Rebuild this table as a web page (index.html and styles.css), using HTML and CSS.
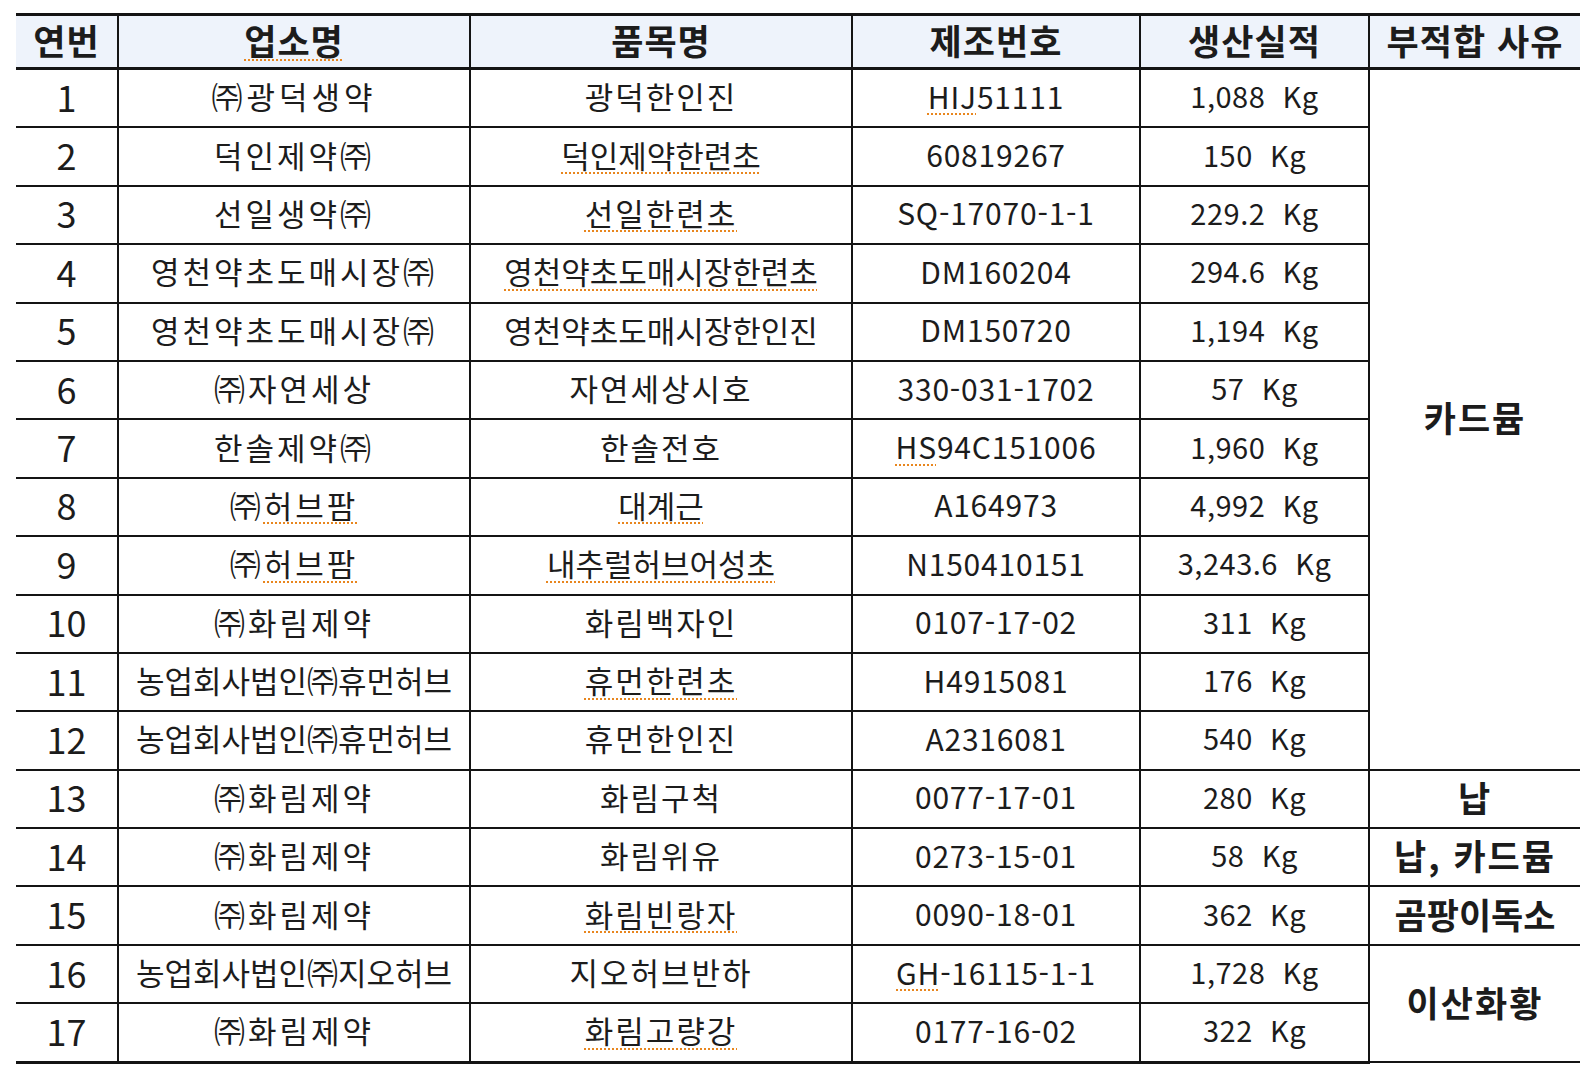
FILE: index.html
```html
<!DOCTYPE html>
<html lang="ko">
<head>
<meta charset="utf-8">
<title>부적합 품목 목록</title>
<link rel="stylesheet" href="styles.css">
</head>
<body>
<div class="page">
<table class="grid">
  <colgroup>
    <col class="c-no">
    <col class="c-co">
    <col class="c-item">
    <col class="c-lot">
    <col class="c-qty">
    <col class="c-why">
  </colgroup>
  <thead>
    <tr>
      <th>연번</th>
      <th><span class="sp">업소명</span></th>
      <th>품목명</th>
      <th>제조번호</th>
      <th>생산실적</th>
      <th>부적합 사유</th>
    </tr>
  </thead>
  <tbody>
    <tr><td class="no">1</td><td class="co wide">㈜광덕생약</td><td class="item">광덕한인진</td><td class="lot"><span class="sp">HIJ</span>51111</td><td class="qty">1,088  Kg</td><td class="why" rowspan="12">카드뮴</td></tr>
    <tr><td class="no">2</td><td class="co">덕인제약㈜</td><td class="item tight"><span class="sp">덕인제약한련초</span></td><td class="lot">60819267</td><td class="qty">150  Kg</td></tr>
    <tr><td class="no">3</td><td class="co">선일생약㈜</td><td class="item"><span class="sp">선일한련초</span></td><td class="lot">SQ-17070-1-1</td><td class="qty">229.2  Kg</td></tr>
    <tr><td class="no">4</td><td class="co">영천약초도매시장㈜</td><td class="item tight"><span class="sp">영천약초도매시장한련초</span></td><td class="lot">DM160204</td><td class="qty">294.6  Kg</td></tr>
    <tr><td class="no">5</td><td class="co">영천약초도매시장㈜</td><td class="item tight">영천약초도매시장한인진</td><td class="lot">DM150720</td><td class="qty">1,194  Kg</td></tr>
    <tr><td class="no">6</td><td class="co">㈜자연세상</td><td class="item">자연세상시호</td><td class="lot">330-031-1702</td><td class="qty">57  Kg</td></tr>
    <tr><td class="no">7</td><td class="co">한솔제약㈜</td><td class="item">한솔전호</td><td class="lot"><span class="sp">HS</span>94C151006</td><td class="qty">1,960  Kg</td></tr>
    <tr><td class="no">8</td><td class="co">㈜<span class="sp">허브팜</span></td><td class="item tight"><span class="sp">대계근</span></td><td class="lot">A164973</td><td class="qty">4,992  Kg</td></tr>
    <tr><td class="no">9</td><td class="co">㈜<span class="sp">허브팜</span></td><td class="item tight"><span class="sp">내추럴허브어성초</span></td><td class="lot">N150410151</td><td class="qty">3,243.6  Kg</td></tr>
    <tr><td class="no">10</td><td class="co">㈜화림제약</td><td class="item">화림백자인</td><td class="lot">0107-17-02</td><td class="qty">311  Kg</td></tr>
    <tr><td class="no">11</td><td class="co tight">농업회사법인㈜휴먼허브</td><td class="item"><span class="sp">휴먼한련초</span></td><td class="lot">H4915081</td><td class="qty">176  Kg</td></tr>
    <tr><td class="no">12</td><td class="co tight">농업회사법인㈜휴먼허브</td><td class="item">휴먼한인진</td><td class="lot">A2316081</td><td class="qty">540  Kg</td></tr>
    <tr><td class="no">13</td><td class="co">㈜화림제약</td><td class="item">화림구척</td><td class="lot">0077-17-01</td><td class="qty">280  Kg</td><td class="why">납</td></tr>
    <tr><td class="no">14</td><td class="co">㈜화림제약</td><td class="item">화림위유</td><td class="lot">0273-15-01</td><td class="qty">58  Kg</td><td class="why">납, 카드뮴</td></tr>
    <tr><td class="no">15</td><td class="co">㈜화림제약</td><td class="item"><span class="sp">화림빈랑자</span></td><td class="lot">0090-18-01</td><td class="qty">362  Kg</td><td class="why tight">곰팡이독소</td></tr>
    <tr><td class="no">16</td><td class="co tight">농업회사법인㈜지오허브</td><td class="item">지오허브반하</td><td class="lot"><span class="sp">GH</span>-16115-1-1</td><td class="qty">1,728  Kg</td><td class="why" rowspan="2">이산화황</td></tr>
    <tr><td class="no">17</td><td class="co">㈜화림제약</td><td class="item"><span class="sp">화림고량강</span></td><td class="lot">0177-16-02</td><td class="qty">322  Kg</td></tr>
  </tbody>
</table>
</div>
</body>
</html>
```

FILE: styles.css
```css
html, body {
  margin: 0;
  padding: 0;
  background: #ffffff;
}

body {
  font-family: "Noto Sans CJK KR", "Noto Sans", sans-serif;
  color: #1c1c1c;
}

.page {
  padding: 13px 0 0 16px;
}

.grid {
  border-collapse: collapse;
  table-layout: fixed;
  width: 1564px;
}

.c-no { width: 102px; }
.c-co { width: 352px; }
.c-item { width: 382px; }
.c-lot { width: 288px; }
.c-qty { width: 229px; }
.c-why { width: 211px; }

.grid th,
.grid td {
  border: 2px solid #141414;
  padding: 0 0 5px 0;
  text-align: center;
  vertical-align: middle;
  white-space: pre;
  overflow: visible;
}

.grid tr > :first-child { border-left: none; }
.grid tr > :last-child { border-right: none; }
.grid td.why { border-right: none; }

.grid thead th {
  border-top: 3px solid #141414;
  border-bottom: 3px solid #141414;
  background: #eef3fb;
  height: 46px;
  font-size: 35px;
  font-weight: 700;
  line-height: 1;
  letter-spacing: 1px;
}

.grid td {
  height: 51.4px;
  font-size: 31px;
  line-height: 1;
  letter-spacing: 2px;
}

.grid tbody tr:last-child td { border-bottom: 3px solid #141414; }

.grid td.no {
  font-size: 36px;
  letter-spacing: 0;
}

.grid td.co { letter-spacing: 3px; }
.grid td.co.wide { letter-spacing: 4px; }
.grid td.co.tight { letter-spacing: 0; }
.grid td.item.tight { letter-spacing: 0; }

.grid td.lot {
  font-size: 30px;
  letter-spacing: 0.8px;
}
.grid td.qty {
  font-size: 29px;
  letter-spacing: 0.5px;
}

.grid td.why {
  font-size: 35px;
  font-weight: 700;
  letter-spacing: 2px;
}
.grid td.why.tight { letter-spacing: 0; }

.sp {
  text-decoration-line: underline;
  text-decoration-style: dotted;
  text-decoration-color: #e8861e;
  text-decoration-thickness: 2px;
  text-underline-offset: 5px;
}
```
